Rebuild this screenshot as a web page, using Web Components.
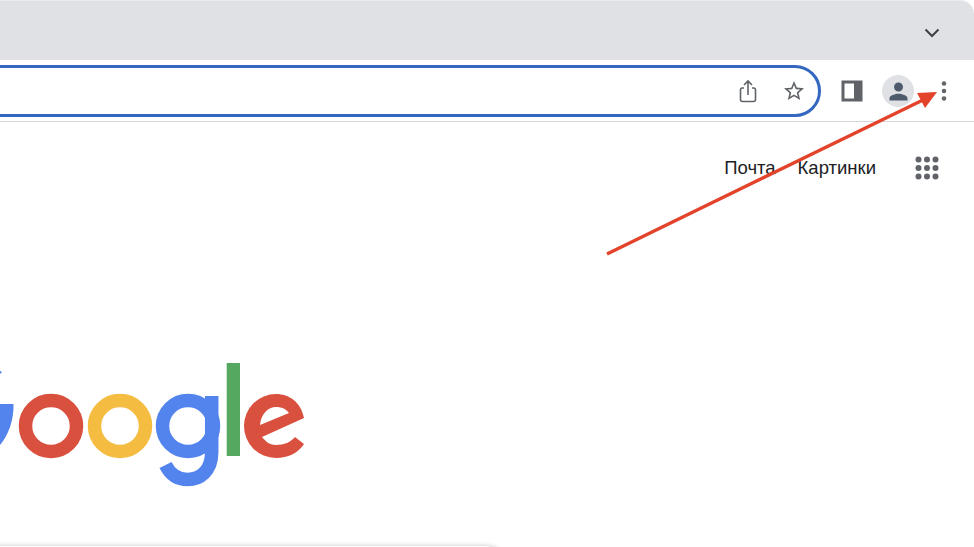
<!DOCTYPE html>
<html lang="ru">
<head>
<meta charset="utf-8">
<title>Google</title>
<style>
    html, body { margin: 0; height: 547px; overflow: hidden; background: #fff; }
    body { position: relative; font-family: "Liberation Sans", Arial, sans-serif; }
</style>
</head>
<body>
<browser-tabstrip></browser-tabstrip>
<browser-toolbar></browser-toolbar>
<google-page>
    <page-link slot="links">Почта</page-link>
    <page-link slot="links">Картинки</page-link>
</google-page>
<annot-arrow></annot-arrow>

<script>
// **************************************************************************** helper
const define = (tag, html) => customElements.define(tag, class extends HTMLElement {
    connectedCallback() {
        if (!this.shadowRoot) this.attachShadow({ mode: 'open' }).innerHTML = html;
    }
});
// **************************************************************************** <browser-tabstrip>
define('browser-tabstrip', `
<style>
    :host { display: flex; justify-content: flex-end; align-items: center; height: 60px; box-sizing: border-box;
            padding: 4px 30px 0 0; background: #dfe1e5; border-top: 1px solid #e9eaec; border-top-right-radius: 14px; }
    svg { display: block; }
</style>
<svg width="24" height="24" viewBox="0 0 24 24" fill="none" stroke="#3c4043" stroke-width="2">
    <path d="M5.500 8.500 12 15l6.500-6.500"/>
</svg>`);
// **************************************************************************** <browser-toolbar>
define('browser-toolbar', `
<style>
    :host { display: flex; align-items: center; height: 62px; box-sizing: border-box; padding: 1px 7px 0 0;
            border-bottom: 1px solid #d6d7d9; }
    omni-box { flex: 1; margin: 0 8px 0 -30px; }
    .btn { width: 46px; display: flex; justify-content: center; align-items: center; }
    .avatar { width: 32px; height: 32px; border-radius: 50%; background: #dfe1e5; display: flex;
              justify-content: center; align-items: center; }
    svg { display: block; }
</style>
<omni-box></omni-box>
<div class="btn">
    <svg width="22" height="22" viewBox="0 0 22 22">
        <rect x="2" y="2" width="18" height="18" fill="#fff" stroke="#5f6368" stroke-width="3"/>
        <rect x="13" y="1" width="8" height="20" fill="#5f6368"/>
    </svg>
</div>
<div class="btn">
    <div class="avatar">
        <svg width="27" height="27" viewBox="0 0 24 24" fill="#4d5b6c">
            <path d="M12 12c2.210 0 4-1.790 4-4s-1.790-4-4-4-4 1.790-4 4 1.790 4 4 4zm0 2c-2.670 0-8 1.340-8 4v2h16v-2c0-2.660-5.330-4-8-4z"/>
        </svg>
    </div>
</div>
<div class="btn">
    <svg width="6" height="22" viewBox="0 0 6 22" fill="#63676c">
        <circle cx="3" cy="3.500" r="2.300"/><circle cx="3" cy="11" r="2.300"/><circle cx="3" cy="18.500" r="2.300"/>
    </svg>
</div>`);
// **************************************************************************** <omni-box>
define('omni-box', `
<style>
    :host { display: flex; justify-content: flex-end; align-items: center; height: 52px; box-sizing: border-box;
            padding-right: 1px; background: #fff; border: 3px solid #3367c0; border-radius: 26px; }
    .btn { width: 46px; display: flex; justify-content: center; }
    svg { display: block; }
</style>
<div class="btn">
    <svg width="24" height="24" viewBox="0 0 24 24" fill="none" stroke="#5f6368" stroke-width="1.600">
        <path d="M8 9H5.800A1.800 1.800 0 0 0 4.500 10.800V21a1.800 1.800 0 0 0 1.800 1.500H17.700A1.800 1.800 0 0 0 19.500 21V10.800A1.800 1.800 0 0 0 18 9H16"/>
        <path d="M12 16V2.500M8 6l4-4 4 4"/>
    </svg>
</div>
<div class="btn">
    <svg width="24" height="24" viewBox="0 0 24 24" fill="#5f6368">
        <path d="M22 9.240l-7.190-.62L12 2 9.190 8.630 2 9.240l5.460 4.730L5.820 21 12 17.270 18.180 21l-1.630-7.030L22 9.240zM12 15.400l-3.760 2.270 1-4.280-3.320-2.880 4.380-.38L12 6.100l1.710 4.040 4.380.38-3.320 2.880 1 4.280L12 15.400z"/>
    </svg>
</div>`);
// **************************************************************************** <page-link>
define('page-link', `
<style>
    :host { display: block; font: 18.500px/24px "Liberation Sans", Arial, sans-serif; color: #202124; }
</style>
<slot></slot>`);
// **************************************************************************** <google-page>
// host clips the search box, only its top edge shows in the frame
define('google-page', `
<style>
    :host { display: block; height: 425px; overflow: hidden; }
    header { display: flex; justify-content: flex-end; align-items: center; gap: 22px; padding: 34px 35px 0 0; }
    .apps { margin-left: 17px; display: block; }
    google-logo { margin-top: 170px; }
    search-box { margin: 56px 0 0 -40px; width: 548px; }
</style>
<header>
    <slot name="links"></slot>
    <svg class="apps" width="24" height="24" viewBox="0 0 24 24" fill="#606368">
        <circle cx="3.500" cy="3.500" r="3"/><circle cx="12" cy="3.500" r="3"/><circle cx="20.500" cy="3.500" r="3"/>
        <circle cx="3.500" cy="12" r="3"/><circle cx="12" cy="12" r="3"/><circle cx="20.500" cy="12" r="3"/>
        <circle cx="3.500" cy="20.500" r="3"/><circle cx="12" cy="20.500" r="3"/><circle cx="20.500" cy="20.500" r="3"/>
    </svg>
</header>
<google-logo></google-logo>
<search-box></search-box>`);
// **************************************************************************** <google-logo>
// viewBox keeps screenshot coordinates, y offset 350
define('google-logo', `
<style>
    :host { display: block; width: 320px; height: 140px; }
    svg { display: block; }
</style>
<svg width="320" height="140" viewBox="0 350 320 140" fill="none" stroke-width="13.500">
    <path d="M0 404H13.500C14 420 8 436 0 445Z" fill="#5384ed"/>
    <path d="M0 371 2 372 0 374Z" fill="#5384ed"/>
    <circle cx="51" cy="426" r="25.500" stroke="#d9503f"/>
    <circle cx="120" cy="426" r="25.500" stroke="#f4bd41"/>
    <circle cx="188" cy="426" r="25.500" stroke="#5384ed"/>
    <path d="M211.700 396V452C211.700 471 200 479.500 187.500 479.500 175.500 479.500 169 472 165.500 465" stroke="#5384ed"/>
    <rect x="226.700" y="363" width="13.300" height="93" fill="#55a860"/>
    <path fill="#d9503f" fill-rule="evenodd" d="M304 418C301 402 289 394 276 394A32 32 0 0 0 276 458C288 458 298 453 304 444L295 437C291 442 284 445 276 445 270 445 266 442 262 437ZM260 425C261 414 268 407 276 407 282 407 286 409 289 413Z"/>
</svg>`);
// **************************************************************************** <search-box>
define('search-box', `
<style>
    :host { display: block; height: 46px; box-sizing: border-box; border-radius: 24px;
            background: #fff; box-shadow: 0 0 5px rgba(32,33,36,.28); }
</style>`);
// **************************************************************************** <annot-arrow>
// annotation lies over the page, so absolute
define('annot-arrow', `
<style>
    :host { position: absolute; left: 0; top: 0; width: 974px; height: 547px; pointer-events: none; }
    svg { display: block; }
</style>
<svg width="974" height="547" viewBox="0 0 974 547">
    <path d="M607 254 925 99" stroke="#e2432a" stroke-width="3.400" fill="none"/>
    <path d="M917 93 937 92 925 108Z" fill="#e2432a"/>
</svg>`);
</script>
</body>
</html>
